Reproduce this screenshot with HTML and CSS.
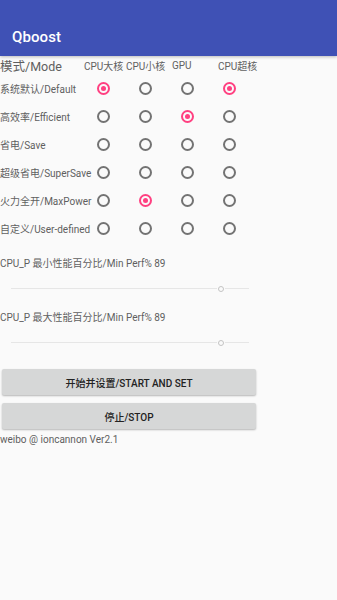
FILE: index.html
```html
<!DOCTYPE html>
<html>
<head>
<meta charset="utf-8">
<link rel="stylesheet" href="styles.css">
</head>
<body>
<header class="appbar"><span class="title">Qboost</span></header>
<main class="content">
  <div class="mode-head">
    <span class="mode-title">模式/Mode</span>
    <span class="col-h h1">CPU大核</span>
    <span class="col-h h2">CPU小核</span>
    <span class="col-h h3">GPU</span>
    <span class="col-h h4">CPU超核</span>
  </div>
  <div class="grid">
    <span class="label">系统默认/Default</span>
    <span class="radio on"></span><span class="radio"></span><span class="radio"></span><span class="radio on"></span>
    <span class="label">高效率/Efficient</span>
    <span class="radio"></span><span class="radio"></span><span class="radio on"></span><span class="radio"></span>
    <span class="label">省电/Save</span>
    <span class="radio"></span><span class="radio"></span><span class="radio"></span><span class="radio"></span>
    <span class="label">超级省电/SuperSave</span>
    <span class="radio"></span><span class="radio"></span><span class="radio"></span><span class="radio"></span>
    <span class="label">火力全开/MaxPower</span>
    <span class="radio"></span><span class="radio on"></span><span class="radio"></span><span class="radio"></span>
    <span class="label">自定义/User-defined</span>
    <span class="radio"></span><span class="radio"></span><span class="radio"></span><span class="radio"></span>
  </div>
  <div class="slider-block first">
    <div class="slider-label">CPU_P 最小性能百分比/Min Perf% 89</div>
    <div class="slider"><span class="track left" style="width:206px"></span><span class="thumb"></span><span class="track right"></span></div>
  </div>
  <div class="slider-block">
    <div class="slider-label">CPU_P 最大性能百分比/Min Perf% 89</div>
    <div class="slider"><span class="track left" style="width:206px"></span><span class="thumb"></span><span class="track right"></span></div>
  </div>
  <div class="buttons">
    <button class="btn">开始并设置/START AND SET</button>
    <button class="btn">停止/STOP</button>
  </div>
  <div class="footer">weibo @ ioncannon Ver2.1</div>
</main>
</body>
</html>
```
FILE: styles.css
```css
* { box-sizing: border-box; }
html, body { margin: 0; padding: 0; }
body {
  width: 337px;
  height: 600px;
  background: #fafafa;
  font-family: Roboto, "Noto Sans CJK SC", sans-serif;
  color: #616161;
  overflow: hidden;
}
.appbar {
  height: 56px;
  background: #3f51b5;
  display: flex;
  align-items: flex-end;
  padding: 0 0 10px 12px;
  box-shadow: 0 1px 3px rgba(0,0,0,0.25);
  position: relative;
}
.title {
  color: #fff;
  font-size: 15px;
  font-weight: 500;
  letter-spacing: 0.1px;
  line-height: 18px;
}
.content { width: 258px; }
.mode-head {
  height: 18px;
  display: flex;
  align-items: center;
}
.mode-title {
  font-size: 12.5px;
  color: #5f5f5f;
  width: 84px;
  white-space: nowrap;
}
.col-h {
  font-size: 10px;
  color: #616161;
  white-space: nowrap;
}
.h1 { width: 42px; }
.h2 { width: 46px; }
.h3 { width: 46px; }
.h4 { width: 40px; }
.grid {
  display: grid;
  grid-template-columns: 82px 42px 42px 42px 42px;
  grid-auto-rows: 28px;
  align-items: center;
}
.label {
  font-size: 10px;
  color: #5f5f5f;
  white-space: nowrap;
}
.radio {
  justify-self: center;
  width: 13px;
  height: 13px;
  border: 2px solid #737373;
  border-radius: 50%;
  display: flex;
  align-items: center;
  justify-content: center;
}
.radio.on { border-color: #ff4081; }
.radio.on::after {
  content: "";
  width: 5px;
  height: 5px;
  border-radius: 50%;
  background: #ff4081;
}
.slider-block { height: 54px; }
.slider-block.first { margin-top: 14px; }
.slider-label {
  font-size: 10px;
  color: #5f5f5f;
  height: 16px;
  line-height: 16px;
  white-space: nowrap;
}
.slider {
  margin-top: 13px;
  height: 7px;
  display: flex;
  align-items: center;
  padding-left: 11px;
}
.track { height: 1px; background: #e6e6e6; display: block; }
.track.right { width: 24px; }
.thumb {
  width: 6px;
  height: 6px;
  border: 1px solid #c4c4c4;
  border-radius: 50%;
  background: #fafafa;
  margin: 0 1px;
}
.buttons {
  margin-top: 5px;
  display: flex;
  flex-direction: column;
  gap: 8px;
  padding-left: 2px;
}
.btn {
  width: 254px;
  height: 26px;
  border: none;
  border-radius: 2px;
  background: #d6d7d7;
  box-shadow: 0 1px 2px rgba(0,0,0,0.28);
  font-family: Roboto, "Noto Sans CJK SC", sans-serif;
  font-size: 10px;
  font-weight: 500;
  color: #222;
  padding: 0;
}
.footer {
  margin-top: 5px;
  font-size: 10px;
  color: #5f5f5f;
  white-space: nowrap;
}
```
